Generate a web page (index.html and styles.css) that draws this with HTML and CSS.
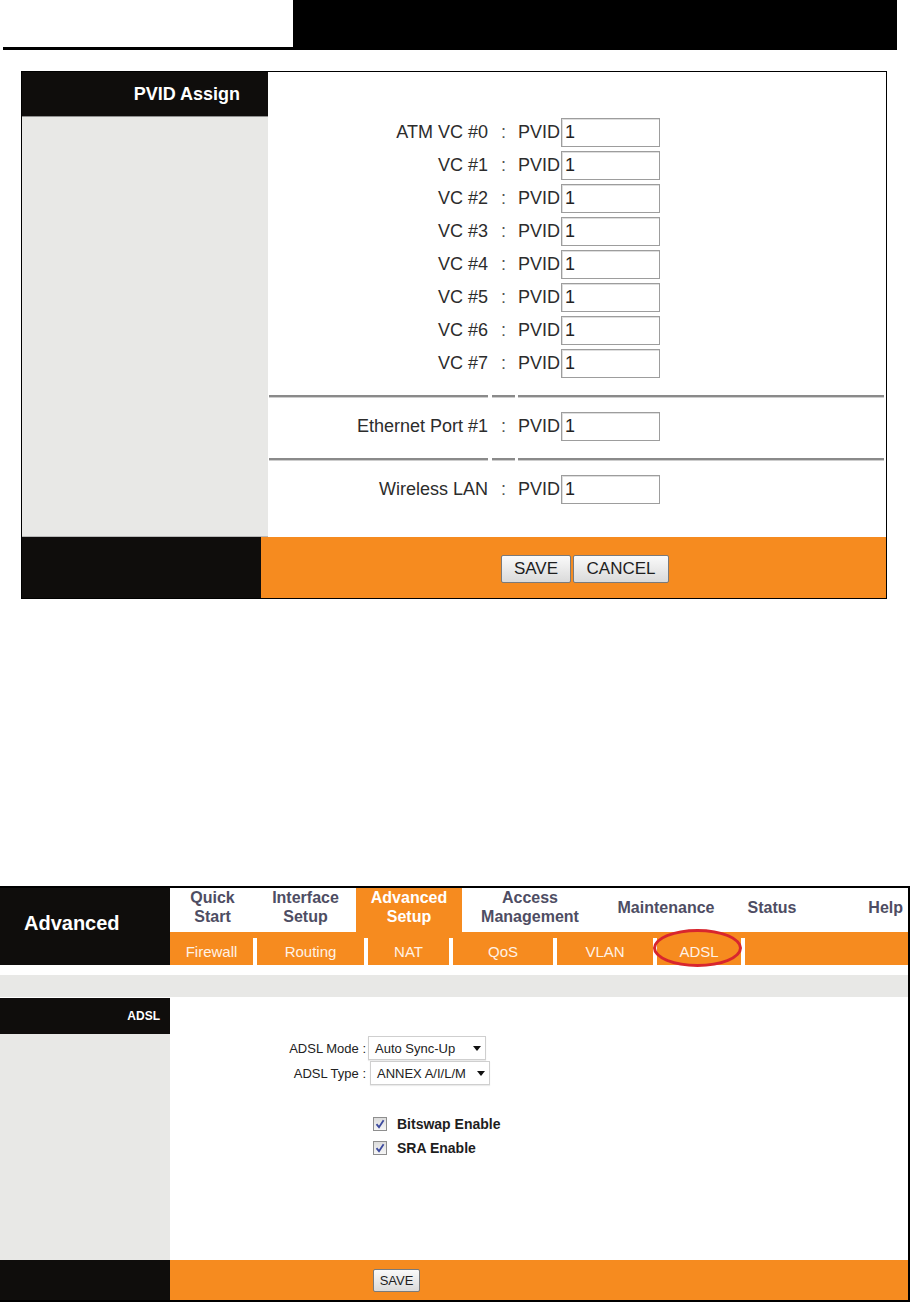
FILE: index.html
```html
<!DOCTYPE html>
<html lang="en">
<head>
    <meta charset="UTF-8">
    <title>PVID Assign / ADSL</title>
    <link rel="stylesheet" href="styles.css">
</head>
<body>
<div class="topbar">
    <div class="topbar-left"></div>
    <div class="topbar-right"></div>
</div>

<div class="pvid">
    <div class="main">
        <div class="side">
            <div class="side-head">PVID Assign</div>
            <div class="side-body"></div>
        </div>
        <div class="content">
            <div class="pvid-grid">
                <span class="lbl">ATM VC #0</span><span class="colon">:</span><span class="val">PVID<input type="text" value="1"></span>
                <span class="lbl">VC #1</span><span class="colon">:</span><span class="val">PVID<input type="text" value="1"></span>
                <span class="lbl">VC #2</span><span class="colon">:</span><span class="val">PVID<input type="text" value="1"></span>
                <span class="lbl">VC #3</span><span class="colon">:</span><span class="val">PVID<input type="text" value="1"></span>
                <span class="lbl">VC #4</span><span class="colon">:</span><span class="val">PVID<input type="text" value="1"></span>
                <span class="lbl">VC #5</span><span class="colon">:</span><span class="val">PVID<input type="text" value="1"></span>
                <span class="lbl">VC #6</span><span class="colon">:</span><span class="val">PVID<input type="text" value="1"></span>
                <span class="lbl">VC #7</span><span class="colon">:</span><span class="val">PVID<input type="text" value="1"></span>

                <div class="sep"></div><div class="sep mid"></div><div class="sep end"></div>

                <span class="lbl">Ethernet Port #1</span><span class="colon">:</span><span class="val">PVID<input type="text" value="1"></span>

                <div class="sep"></div><div class="sep mid"></div><div class="sep end"></div>

                <span class="lbl">Wireless LAN</span><span class="colon">:</span><span class="val">PVID<input type="text" value="1"></span>
            </div>
        </div>
    </div>
    <div class="foot">
        <div class="foot-side"></div>
        <div class="foot-main">
            <button class="btn btn-save">SAVE</button>
            <button class="btn btn-cancel">CANCEL</button>
        </div>
    </div>
</div>

<div class="adsl">
    <div class="head">
        <div class="brand">Advanced</div>
        <div class="menus">
            <ul class="menu">
                <li>Quick<br>Start</li>
                <li>Interface<br>Setup</li>
                <li class="active">Advanced<br>Setup</li>
                <li>Access<br>Management</li>
                <li>Maintenance</li>
                <li>Status</li>
                <li class="help">Help</li>
            </ul>
            <ul class="submenu">
                <li>Firewall</li>
                <li>Routing</li>
                <li>NAT</li>
                <li>QoS</li>
                <li>VLAN</li>
                <li class="current">ADSL<span class="ring"></span></li>
                <li></li>
            </ul>
        </div>
    </div>
    <div class="band"></div>
    <div class="bar"></div>
    <div class="body">
        <div class="side">
            <div class="side-head">ADSL</div>
            <div class="side-body"></div>
        </div>
        <div class="form">
            <div class="field">
                <span class="field-lbl">ADSL Mode :</span>
                <span class="sel sel-mode">Auto Sync-Up<i class="arrow"></i></span>
            </div>
            <div class="field">
                <span class="field-lbl">ADSL Type :</span>
                <span class="sel sel-type">ANNEX A/I/L/M<i class="arrow"></i></span>
            </div>
            <div class="checks">
                <label class="check">
                    <span class="cb"><svg width="12" height="12" viewBox="0 0 12 12"><path d="M2.5 6.2 L5 9.2 L9.6 2.2" fill="none" stroke="#3c4a9e" stroke-width="1.8"/></svg></span>
                    Bitswap Enable
                </label>
                <label class="check">
                    <span class="cb"><svg width="12" height="12" viewBox="0 0 12 12"><path d="M2.5 6.2 L5 9.2 L9.6 2.2" fill="none" stroke="#3c4a9e" stroke-width="1.8"/></svg></span>
                    SRA Enable
                </label>
            </div>
        </div>
    </div>
    <div class="foot">
        <div class="foot-side"></div>
        <div class="foot-main">
            <button class="btn btn-small">SAVE</button>
        </div>
    </div>
</div>
</body>
</html>
```

FILE: styles.css
```css
html,body{
    margin:0;
    padding:0;
    background:#fff;
    font-family:"Liberation Sans",Arial,sans-serif;
}
ul{
    margin:0;
    padding:0;
    list-style:none;
}

/* page header strip */
.topbar{
    display:flex;
    height:50px;
}
.topbar-left{
    width:290px;
    height:47px;
    margin-left:3px;
    border-bottom:3px solid #000;
}
.topbar-right{
    width:604px;
    background:#000;
}

/* shared cells */
.side{
    display:flex;
    flex-direction:column;
}
.side-head{
    background:#0f0d0c;
    color:#fff;
    font-weight:bold;
    text-align:right;
}
.side-body{
    flex:1;
    background:#e8e8e6;
}
.foot{
    display:flex;
}
.foot-side{
    background:#0f0d0c;
}
.foot-main{
    flex:1;
    display:flex;
    align-items:flex-start;
    background:#f68b1f;
}
.btn{
    font-family:"Liberation Sans",Arial,sans-serif;
    color:#1e1e1e;
    background:linear-gradient(#fafafa,#dadada);
    border:1px solid #7a7a7a;
    border-radius:2px;
    padding:0;
}

/* PVID panel */
.pvid{
    margin:21px 0 0 21px;
    width:864px;
    border:1px solid #000;
}
.pvid .main{
    display:flex;
    height:465px;
}
.pvid .side{
    width:246px;
}
.pvid .side-head{
    height:44px;
    line-height:44px;
    font-size:18px;
    padding-right:28px;
}
.pvid .side-body{
    border-top:1px solid #8f8f8f;
    border-bottom:1px solid #b8b8b8;
}
.pvid .content{
    flex:1;
    padding:44px 2px 0 1px;
}
.pvid-grid{
    display:grid;
    grid-template-columns:219px 27px 1fr;
    font-size:18px;
    color:#2c2c2c;
}
.lbl,.colon,.val{
    height:33px;
    display:flex;
    align-items:center;
}
.lbl{
    justify-content:flex-end;
    white-space:nowrap;
}
.colon{
    justify-content:center;
    padding-left:4px;
    color:#555;
}
.val{
    padding-left:3px;
}
.val input{
    box-sizing:border-box;
    width:99px;
    height:29px;
    margin:0 0 0 1px;
    padding:0 3px;
    border:1px solid #9d9d9d;
    box-shadow:inset 1px 1px 0 #dedede;
    font:18px "Liberation Sans",Arial,sans-serif;
    color:#222;
    outline:none;
}
.sep{
    border-top:2px solid #8a8a8a;
    border-bottom:1px solid #cdcdcd;
    margin:15px 0 12px;
}
.sep.mid{
    margin-left:4px;
}
.sep.end{
    margin-left:3px;
}
.pvid .foot{
    height:61px;
}
.pvid .foot-side{
    width:239px;
}
.pvid .foot-main{
    padding:18px 0 0 240px;
    gap:2px;
}
.pvid .btn{
    height:28px;
    font-size:17px;
}
.btn-save{
    width:70px;
}
.btn-cancel{
    width:96px;
}

/* ADSL panel */
.adsl{
    margin-top:287px;
    width:908px;
    border-top:2px solid #000;
    border-right:2px solid #000;
    border-bottom:2px solid #000;
}
.adsl .head{
    display:flex;
    height:77px;
}
.brand{
    width:170px;
    box-sizing:border-box;
    padding:0 0 7px 24px;
    display:flex;
    align-items:center;
    background:#0f0d0c;
    color:#fff;
    font-size:20px;
    font-weight:bold;
}
.menus{
    flex:1;
    display:flex;
    flex-direction:column;
}
.menu{
    display:grid;
    grid-template-columns:85px 101px 106px 136px 136px 76px 1fr;
    height:44px;
}
.menu li{
    box-sizing:border-box;
    display:flex;
    align-items:center;
    justify-content:center;
    padding-bottom:6px;
    text-align:center;
    font-size:16px;
    font-weight:bold;
    line-height:19px;
    color:#4e4d63;
}
.menu li.active{
    background:#f68b1f;
    color:#fff;
}
.menu li.help{
    justify-content:flex-end;
    padding-right:5px;
}
.submenu{
    display:grid;
    grid-template-columns:83px 107px 81px 100px 96px 84px 1fr;
    column-gap:4px;
    height:33px;
    background:linear-gradient(#f68b1f 6px,#fff 6px);
}
.submenu li{
    position:relative;
    box-sizing:border-box;
    display:flex;
    align-items:center;
    justify-content:center;
    padding-top:6px;
    background:#f68b1f;
    font-size:15px;
    color:#fff2e6;
}
.ring{
    position:absolute;
    left:-4px;
    top:-3px;
    right:-1px;
    bottom:-2px;
    border:3px solid #d8262e;
    border-radius:50%;
}
.band{
    height:10px;
}
.bar{
    height:22px;
    margin-bottom:1px;
    background:#e8e8e6;
}
.adsl .body{
    display:flex;
    height:262px;
}
.adsl .side{
    width:170px;
}
.adsl .side-head{
    height:36px;
    line-height:36px;
    font-size:12px;
    padding-right:10px;
}
.form{
    flex:1;
    padding-top:38px;
    font-size:13px;
    color:#222;
}
.field{
    display:flex;
    align-items:center;
    height:24px;
    margin-bottom:1px;
}
.field-lbl{
    width:196px;
    text-align:right;
    white-space:nowrap;
}
.sel{
    box-sizing:border-box;
    display:flex;
    align-items:center;
    height:24px;
    padding-left:6px;
    border:1px solid #cfcfcf;
    box-shadow:0 1px 1px rgba(0,0,0,0.08);
    background:#fff;
    white-space:nowrap;
}
.sel-mode{
    width:118px;
    margin-left:2px;
}
.sel-type{
    width:120px;
    margin-left:4px;
}
.arrow{
    margin-left:auto;
    margin-right:4px;
    width:0;
    height:0;
    border-left:4px solid transparent;
    border-right:4px solid transparent;
    border-top:5px solid #111;
}
.checks{
    padding:26px 0 0 203px;
}
.check{
    display:flex;
    align-items:center;
    gap:10px;
    height:24px;
    font-size:14px;
    font-weight:bold;
    color:#1e1e1e;
}
.cb{
    box-sizing:border-box;
    width:14px;
    height:14px;
    display:flex;
    align-items:center;
    justify-content:center;
    border:1px solid #8e8e8e;
    background:linear-gradient(#dcdcdc,#f6f6f6);
}
.adsl .foot{
    height:40px;
}
.adsl .foot-side{
    width:170px;
}
.adsl .foot-main{
    padding:9px 0 0 203px;
}
.btn-small{
    width:47px;
    height:23px;
    font-size:13px;
}
```
